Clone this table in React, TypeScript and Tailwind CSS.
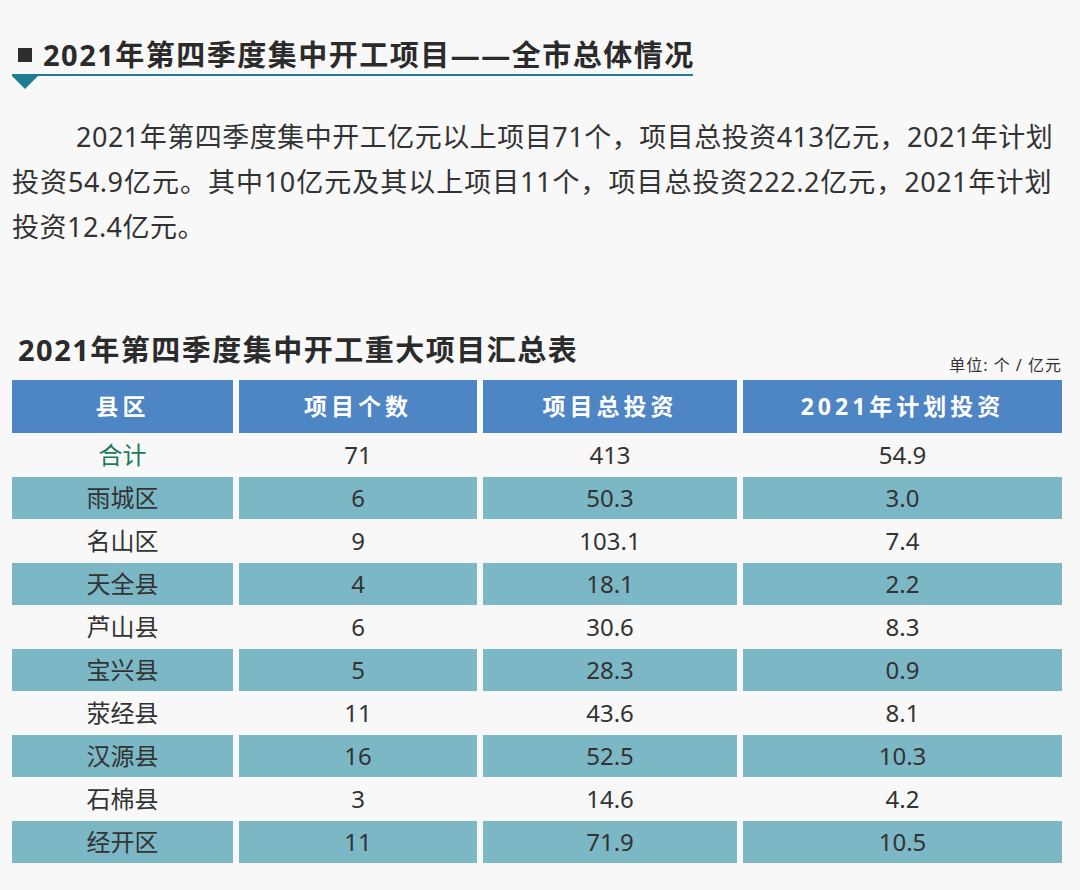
import React from "react";

const rows: [string, string, string, string][] = [
  ["雨城区", "6", "50.3", "3.0"],
  ["名山区", "9", "103.1", "7.4"],
  ["天全县", "4", "18.1", "2.2"],
  ["芦山县", "6", "30.6", "8.3"],
  ["宝兴县", "5", "28.3", "0.9"],
  ["荥经县", "11", "43.6", "8.1"],
  ["汉源县", "16", "52.5", "10.3"],
  ["石棉县", "3", "14.6", "4.2"],
  ["经开区", "11", "71.9", "10.5"],
];

const font = { fontFamily: '"Noto Sans", "Noto Sans CJK SC", sans-serif' };

export default function App() {
  return (
    <div
      className="w-[1080px] h-[890px] bg-[#f8f8f8] text-[#333] px-[12px] overflow-hidden"
      style={font}
    >
      {/* Section title */}
      <div className="pt-[37px]">
        <div className="flex items-center h-[36px]">
          <div className="w-[14px] h-[14px] bg-[#2e2e2e] ml-[6px]" />
          <div className="ml-[11px] text-[29px] leading-[36px] font-bold tracking-[1.5px] text-[#2b2b2b] whitespace-nowrap">
            2021年第四季度集中开工项目——全市总体情况
          </div>
        </div>
        <div className="w-[681px] h-[2px] bg-[#1e7d93] mt-[1px]" />
        <svg width="26" height="13" viewBox="0 0 26 13" className="block">
          <polygon points="0,0 26,0 13,13" fill="#1e7d93" />
        </svg>
      </div>

      {/* Paragraph */}
      <div className="mt-[25px] w-[1040px] text-[27px] leading-[45px] tracking-[0.5px] text-[#333] whitespace-nowrap">
        <div className="pl-[64px] text-justify [text-align-last:justify]">
          2021年第四季度集中开工亿元以上项目71个，项目总投资413亿元，2021年计划
        </div>
        <div className="text-justify [text-align-last:justify]">
          投资54.9亿元。其中10亿元及其以上项目11个，项目总投资222.2亿元，2021年计划
        </div>
        <div>投资12.4亿元。</div>
      </div>

      {/* Table title */}
      <div className="mt-[83px] w-[1050px] flex items-end justify-between">
        <div className="ml-[6px] mb-[7px] text-[29px] leading-[36px] font-bold tracking-[1.5px] text-[#2b2b2b] whitespace-nowrap">
          2021年第四季度集中开工重大项目汇总表
        </div>
        <div className="text-[16px] leading-[20px] tracking-[1px] text-[#333] whitespace-nowrap">
          单位: 个 / 亿元
        </div>
      </div>

      {/* Table */}
      <div className="mt-[5px] grid grid-cols-[221px_238px_254px_319px] gap-x-[6px] gap-y-[1px]">
        {["县区", "项目个数", "项目总投资", "2021年计划投资"].map((h) => (
          <div
            key={h}
            className="h-[53px] bg-[#4e85c5] flex items-center justify-center text-white text-[23px] font-bold tracking-[4px]"
          >
            {h}
          </div>
        ))}

        {/* 合计 row */}
        <div className="h-[42px] flex items-center justify-center text-[24px] text-[#1c7a5c]">合计</div>
        <div className="h-[42px] flex items-center justify-center text-[24px]">71</div>
        <div className="h-[42px] flex items-center justify-center text-[24px]">413</div>
        <div className="h-[42px] flex items-center justify-center text-[24px]">54.9</div>

        {rows.map((r, i) => {
          const shaded = i % 2 === 0;
          return r.map((c, j) => (
            <div
              key={`${i}-${j}`}
              className={
                shaded
                  ? "h-[42px] bg-[#7cb7c6] flex items-center justify-center text-[24px] text-[#333]"
                  : "h-[42px] flex items-center justify-center text-[24px] text-[#333]"
              }
            >
              {c}
            </div>
          ));
        })}
      </div>
    </div>
  );
}
